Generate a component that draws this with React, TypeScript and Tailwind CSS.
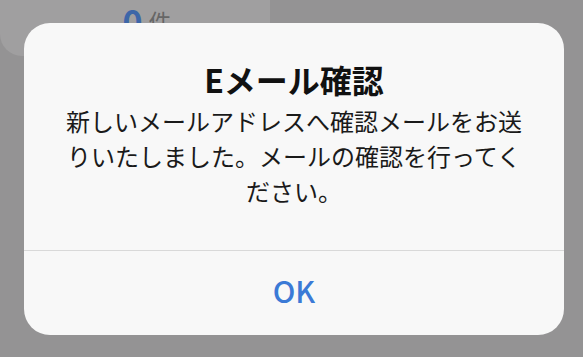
export default function App() {
  return (
    <div
      className="relative w-[583px] h-[357px] overflow-hidden bg-[#949394]"
      style={{ fontFamily: '"Noto Sans CJK JP", "Noto Sans", sans-serif' }}
    >
      {/* dimmed page behind the alert */}
      <div className="w-[270px] h-[56px] bg-[#a09fa0] rounded-bl-[22px] flex justify-center">
        <div className="flex items-end mt-[-4px] ml-[24px] h-[42px] leading-none">
          <span className="text-[34px] font-bold text-[#3d66a8]">0</span>
          <span className="text-[23px] text-[#666] ml-[6px] mb-[5px]">件</span>
        </div>
      </div>

      {/* alert */}
      <div className="absolute left-[24px] top-[23px] w-[540px] h-[312px] bg-[#f8f8f8] rounded-[26px] flex flex-col">
        <div className="flex flex-col items-center pt-[36px] h-[227px]">
          <h2 className="text-[32px] font-bold leading-[40px] text-[#111]">Eメール確認</h2>
          <p className="mt-[4px] text-[24px] leading-[35px] text-center text-[#1a1a1a]">
            新しいメールアドレスへ確認メールをお送
            <br />
            りいたしました。メールの確認を行ってく
            <br />
            ださい。
          </p>
        </div>
        <div className="h-px bg-[#d9d9d9]" />
        <button className="flex-1 flex items-center justify-center text-[30px] font-medium text-[#3b7ad6] pb-[5px]">
          OK
        </button>
      </div>
    </div>
  )
}
